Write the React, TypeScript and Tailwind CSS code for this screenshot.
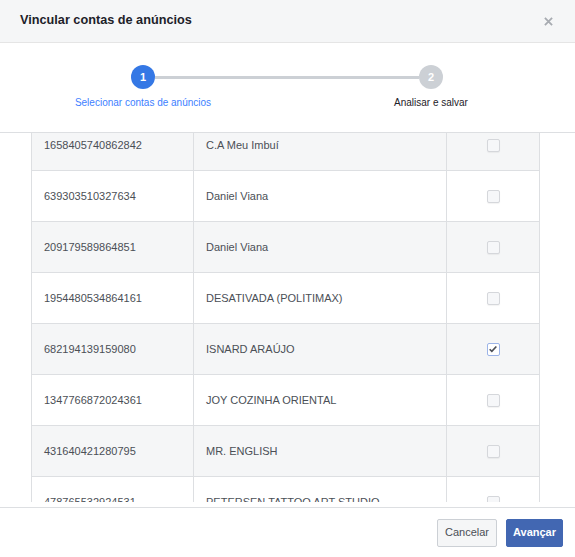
import React from 'react';

const rows = [
  { id: '1658405740862842', name: 'C.A Meu Imbuí', checked: false },
  { id: '639303510327634', name: 'Daniel Viana', checked: false },
  { id: '209179589864851', name: 'Daniel Viana', checked: false },
  { id: '1954480534864161', name: 'DESATIVADA (POLITIMAX)', checked: false },
  { id: '682194139159080', name: 'ISNARD ARAÚJO', checked: true },
  { id: '1347766872024361', name: 'JOY COZINHA ORIENTAL', checked: false },
  { id: '431640421280795', name: 'MR. ENGLISH', checked: false },
  { id: '478765532924531', name: 'PETERSEN TATTOO ART STUDIO', checked: false },
];

function Checkbox({ checked }: { checked: boolean }) {
  if (checked) {
    return (
      <span className="flex h-[13px] w-[13px] items-center justify-center rounded-[2px] border border-[#9cb4e8] bg-white">
        <svg viewBox="0 0 12 12" className="h-[10px] w-[10px]">
          <path d="M2 6.3 4.6 8.8 10 3" fill="none" stroke="#4b4f56" strokeWidth={2} />
        </svg>
      </span>
    );
  }
  return <span className="block h-[13px] w-[13px] rounded-[2px] border border-[#d5d7db] bg-[#f6f7f9] shadow-[0_1px_1px_rgba(0,0,0,0.05)]" />;
}

function Step({ n, label, active }: { n: number; label: string; active?: boolean }) {
  return (
    <div className="flex w-[150px] flex-col items-center">
      <div
        className={
          active
            ? 'flex h-6 w-6 items-center justify-center rounded-full bg-[#3578e5] text-[11px] font-bold text-white'
            : 'flex h-6 w-6 items-center justify-center rounded-full bg-[#ccd0d5] text-[11px] font-bold text-white'
        }
      >
        {n}
      </div>
      <div className={active ? 'mt-[6px] text-[10px] text-[#4080ff]' : 'mt-[6px] text-[10px] text-[#1d2129]'}>
        {label}
      </div>
    </div>
  );
}

export default function App() {
  return (
    <div className="flex h-[557px] w-[575px] flex-col overflow-hidden bg-white font-['Liberation_Sans',Arial,sans-serif]">
      {/* Header */}
      <div className="flex h-[43px] shrink-0 items-center justify-between border-b border-[#e5e5e5] bg-[#f5f6f7] pl-5 pr-[22px]">
        <h1 className="-mt-px text-[12.7px] font-bold text-[#1d2129]">Vincular contas de anúncios</h1>
        <svg viewBox="0 0 10 10" className="h-[9px] w-[9px]">
          <path d="M1 1 9 9M9 1 1 9" stroke="#a7abb1" strokeWidth={2} />
        </svg>
      </div>

      {/* Stepper */}
      <div className="h-[90px] shrink-0 border-b border-[#dddfe2] pt-[22px]">
        <div className="ml-[68px] flex w-[438px]">
          <Step n={1} label="Selecionar contas de anúncios" active />
          <div className="-mx-[63px] mt-[11px] h-[3px] flex-1 bg-[#ccd0d5]" />
          <Step n={2} label="Analisar e salvar" />
        </div>
      </div>

      {/* Table */}
      <div className="min-h-0 flex-1 pb-[5px]">
        <div className="h-full overflow-hidden">
          <div className="-mt-[13px] ml-[31px] w-[509px] border-x border-[#dddfe2]">
            {rows.map((r, i) => (
              <div
                key={r.id}
                className={
                  i % 2 === 0
                    ? 'flex h-[51px] border-b border-[#dddfe2] bg-[#f5f6f7] text-[11px] text-[#4b4f56]'
                    : 'flex h-[51px] border-b border-[#dddfe2] bg-white text-[11px] text-[#4b4f56]'
                }
              >
                <div className="flex w-[162px] items-center border-r border-[#dddfe2] pl-3">{r.id}</div>
                <div className="flex w-[253px] items-center border-r border-[#dddfe2] pl-3">{r.name}</div>
                <div className="flex flex-1 items-center justify-center">
                  <Checkbox checked={r.checked} />
                </div>
              </div>
            ))}
          </div>
        </div>
      </div>

      {/* Footer */}
      <div className="flex h-[50px] shrink-0 items-center justify-end gap-[9px] border-t border-[#dddfe2] pr-3">
        <button className="h-[28px] rounded-[2px] border border-[#ccd0d5] bg-[#f5f6f7] px-[7px] text-[11px] text-[#4b4f56]">
          Cancelar
        </button>
        <button className="h-[28px] rounded-[2px] border border-[#4267b2] bg-[#4267b2] px-[6px] text-[11px] font-bold text-white">
          Avançar
        </button>
      </div>
    </div>
  );
}
